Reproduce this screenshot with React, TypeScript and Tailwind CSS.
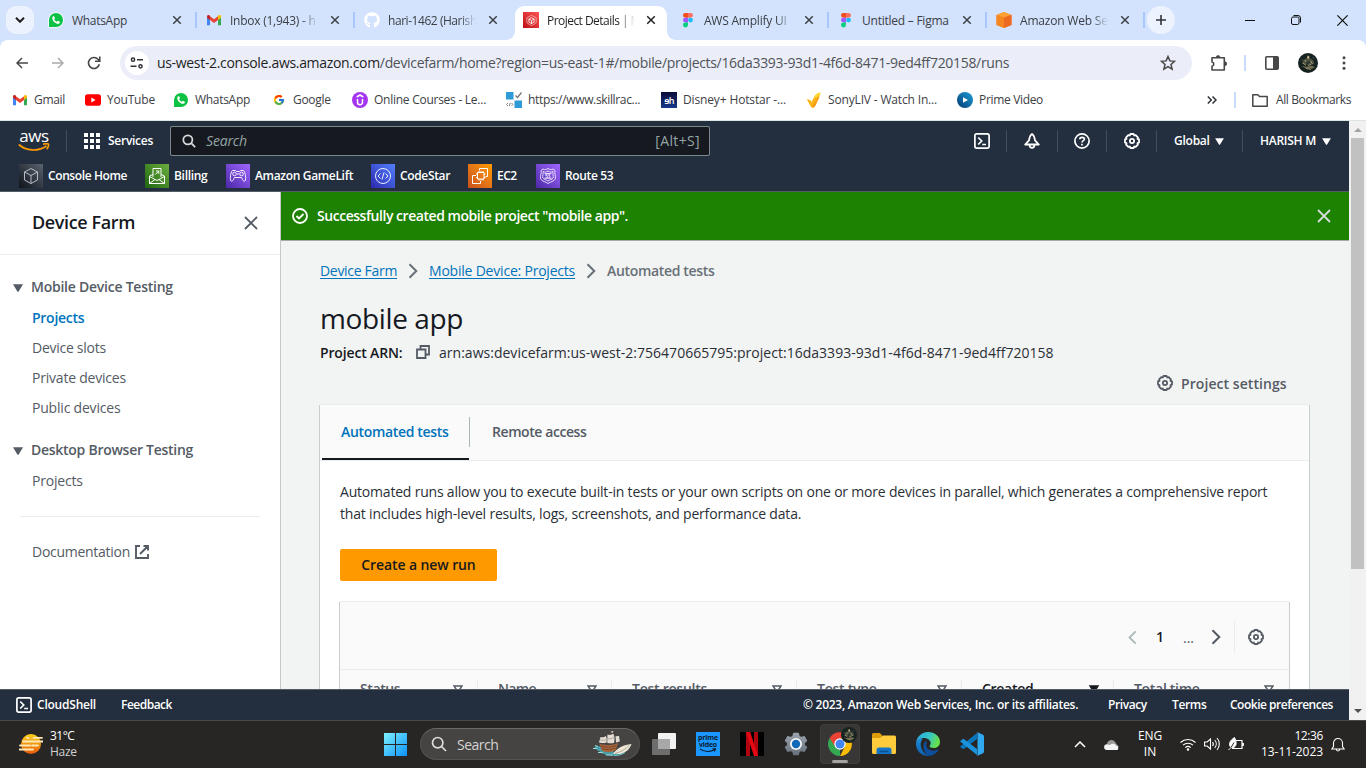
import type { ReactNode } from "react";
import { FaGithub } from "react-icons/fa";
import { FcGoogle } from "react-icons/fc";

type P = { className?: string };

/* ---------- brand icons ---------- */
const WhatsApp = () => (
  <span className="flex h-4 w-4 shrink-0 items-center justify-center">
    <span className="flex h-[14px] w-[14px] items-center justify-center rounded-full rounded-bl-[3px] bg-[#0cc143] ring-1 ring-white/70">
      <svg viewBox="0 0 24 24" className="h-[10px] w-[10px]">
        <path fill="#fff" d="M6.600 2.500c-.7.1-3.800 1.900-3.600 5.400.3 6.300 7.700 13.400 13.900 13.400 2.700-.1 4.600-2.300 4.600-4.300 0-.8-4.600-3.300-5.400-3.100-.8.3-1.700 2.500-2.500 2.500-1.300 0-5.900-4.100-6.100-6 0-.7 2-1.700 2-2.700C9.400 6.700 7.600 2.400 6.600 2.500z" />
      </svg>
    </span>
  </span>
);
const Gmail = () => (
  <svg viewBox="0 0 16 16" className="h-4 w-4 shrink-0">
    <path fill="#4285f4" d="M1 5v8.200h3V7.500z" />
    <path fill="#34a853" d="M15 5v8.200h-3V7.500z" />
    <path fill="#ea4335" d="M4 4.200 8 7.300l4-3.100v3.900l-4 3-4-3z" />
    <path fill="#c5221f" d="M1 5c0-2.200 1.700-2.500 3-1.300v4.200L1 5.700z" />
    <path fill="#fbbc04" d="M15 5c0-2.200-1.700-2.500-3-1.300v4.200l3-2.200z" />
  </svg>
);
const YouTube = () => (
  <svg viewBox="0 0 16 16" className="h-4 w-4 shrink-0">
    <rect y="2.300" width="16" height="11.400" rx="2.800" fill="#f00" />
    <path d="M6.300 5.500v5l4.200-2.500z" fill="#fff" />
  </svg>
);
const Udemy = () => (
  <svg viewBox="0 0 16 16" className="h-4 w-4 shrink-0">
    <circle cx="8" cy="8" r="8" fill="#a435f0" />
    <path d="M4.700 5 8 3l3.300 2M5.500 7v3.200a2.500 2.500 0 0 0 5 0V7" fill="none" stroke="#fff" strokeWidth="1.500" />
  </svg>
);
const SkillRack = () => (
  <svg viewBox="0 0 16 16" className="h-4 w-4 shrink-0">
    <rect width="7.500" height="7.500" fill="#2f9bd6" />
    <rect x="8.500" y="8.500" width="7.500" height="7.500" fill="#2f9bd6" />
    <path d="m9.500 3.500 2 2L15.500.5" fill="none" stroke="#777" strokeWidth="1.300" />
    <path d="M2 11 .500 12.500 2 14M5.500 11 7 12.500 5.500 14M4.300 10.800l-1 3.400" fill="none" stroke="#777" strokeWidth=".9" />
  </svg>
);
const Hotstar = () => (
  <span className="flex h-4 w-4 shrink-0 items-center justify-center bg-gradient-to-b from-[#0a0d38] to-[#163a8c] text-[9px] font-semibold leading-none tracking-[-0.8px] text-white">ɘh</span>
);
const SonyLiv = () => (
  <svg viewBox="0 0 16 16" className="h-4 w-4 shrink-0">
    <path d="M.8 7.200c2.200-.2 4 .6 4.700 2.800L8.500 4.500C10 2 12 .800 14.500.500c-.8 2-.7 3.500-1.500 5.500L9 14.300c-1.200 1.800-3.600 1.800-4.600-.2z" fill="#fbb516" />
    <path d="M8.500 4.500C10 2 12 .800 14.500.500l-.8 3.300L9 6z" fill="#fdd835" />
    <path d="M13.300 5 9 14.300c-.9 1.300-2.200 1.500-3.200 1L12 5z" fill="#f4991a" />
  </svg>
);
const PrimePlay = () => (
  <svg viewBox="0 0 16 16" className="h-4 w-4 shrink-0">
    <defs>
      <linearGradient id="pv" x1="1" y1="0" x2="0" y2="1"><stop stopColor="#1ca0d8" /><stop offset="1" stopColor="#063a72" /></linearGradient>
    </defs>
    <circle cx="8" cy="8" r="8" fill="url(#pv)" />
    <path d="M6 5.200v5.600L11 8z" fill="#fff" />
  </svg>
);
const Figma = () => (
  <svg viewBox="0 0 16 16" className="h-4 w-4 shrink-0">
    <path d="M5.300 1H8v4.700H5.300a2.350 2.350 0 0 1 0-4.700z" fill="#f24e1e" />
    <path d="M8 1h2.700a2.350 2.350 0 0 1 0 4.700H8z" fill="#ff7262" />
    <path d="M5.300 5.700H8v4.700H5.300a2.350 2.350 0 0 1 0-4.700z" fill="#a259ff" />
    <circle cx="10.500" cy="8.050" r="2.400" fill="#1abcfe" />
    <path d="M5.300 10.400H8v2.400a2.500 2.500 0 1 1-2.700-2.400z" fill="#0acf83" />
  </svg>
);
const AwsCube = () => (
  <svg viewBox="0 0 16 16" className="h-4 w-4 shrink-0">
    <path d="M8 0 15.500 3v10L8 16 .500 13V3z" fill="#f58536" />
    <path d="M8 0 15.500 3 8 5.500.500 3z" fill="#ffa033" />
    <path d="M8 5.500 15.500 3v10L8 16z" fill="#ec6a22" />
    <path d="M8 5.500.500 3v10L8 16z" fill="#f6861f" />
  </svg>
);
const DeviceFarmIcon = () => (
  <span className="flex h-4 w-4 shrink-0 items-center justify-center bg-gradient-to-tr from-[#bd0816] to-[#ff5252]">
    <svg viewBox="0 0 14 14" className="h-[13px] w-[13px]" fill="none" stroke="#fff">
      <path d="M7 1.500 12 4v5.500L7 12.500 2 9.500V4z" strokeWidth=".7" opacity=".75" />
      <path d="M7 10.500V7L4.200 5.500M7 7l2.800-1.500M4.200 5.500v3.200L7 10.300l2.800-1.600V5.500L7 4z" strokeWidth=".9" />
    </svg>
  </span>
);
const Avatar = ({ className = "" }: P) => (
  <svg viewBox="0 0 20 20" className={className}>
    <defs><clipPath id="av"><circle cx="10" cy="10" r="10" /></clipPath></defs>
    <g clipPath="url(#av)">
      <rect width="20" height="20" fill="#172321" />
      <path d="M8 5.500c1-1 4-1 5 .5l2.500 1.500.5 3.500-3.300 1-5.800-.5-3-1L5.500 7z" fill="#4f5341" />
      <path d="M9.500 3c1-.6 2 0 1.900 1.500L10.200 6 9 5z" fill="#c9b38f" />
      <path d="M7.500 7.500 9.500 9l2.500-1.500-.5 2.500-2.500 1.500z" fill="#26322b" />
      <path d="M3.500 13l4.500.7 5.500-1 3.500 1.300-3 1.800-6.500-.5z" fill="#746f50" />
      <path d="M5 10l3 2.500M12.500 8l2 3M8 15.500l5 .8M7 7l1 2M13 11.500l-3 1" stroke="#b5a984" strokeWidth=".8" />
      <path d="M3.500 8l1.500-2M15 4l1 2" stroke="#3f5048" />
    </g>
  </svg>
);

/* ---------- line icons ---------- */
const Cross = ({ className = "" }: P) => (
  <svg viewBox="0 0 16 16" className={className} fill="none" stroke="currentColor"><path d="m2 2 12 12M14 2 2 14" /></svg>
);
const Gear = ({ className = "" }: P) => (
  <svg viewBox="0 0 16 16" className={className} fill="none" stroke="currentColor" strokeWidth="1.800">
    <path strokeLinejoin="round" d="M6.400 1h3.200l.6 1.500 1.500-.4 2.200 2.200-.4 1.500 1.500.6v3.200l-1.500.6.4 1.500-2.200 2.200-1.500-.4-.6 1.500H6.400l-.6-1.500-1.500.4-2.200-2.200.4-1.500L1 9.600V6.400l1.500-.6-.4-1.500 2.200-2.200 1.500.4z" />
    <circle cx="8" cy="8" r="2.100" />
  </svg>
);
const Terminal = ({ className = "" }: P) => (
  <svg viewBox="0 0 16 16" className={className} fill="none" stroke="currentColor" strokeWidth="1.700">
    <rect x=".9" y=".9" width="14.200" height="14.200" rx="1.800" />
    <path d="M4.200 4.500 7.700 8l-3.500 3.500M8.200 11.500H12" />
  </svg>
);
const Caret = ({ className = "" }: P) => (
  <svg viewBox="0 0 10 8" className={className} fill="currentColor"><path d="M0 .200h10L5.500 7.800h-1z" /></svg>
);
const Chevron = ({ className = "" }: P) => (
  <svg viewBox="0 0 10 16" className={className} fill="none" stroke="currentColor" strokeWidth="2"><path d="m1.500 1.200 6.800 6.800-6.800 6.800" /></svg>
);
const Search = ({ className = "" }: P) => (
  <svg viewBox="0 0 16 16" className={className} fill="none" stroke="currentColor"><circle cx="6.700" cy="6.700" r="5.200" /><path d="m10.500 10.500 4.500 4.500" /></svg>
);

/* ---------- browser chrome ---------- */
type Tab = { icon: ReactNode; title: string; cls: string; active?: boolean; sep?: boolean };
const fade = "[mask-image:linear-gradient(to_right,#000_80%,transparent_98%)] ";
const tabs: Tab[] = [
  { icon: <WhatsApp />, title: "WhatsApp", cls: "tracking-[-0.3px]", sep: true },
  { icon: <Gmail />, title: "Inbox (1,943) - h", cls: fade + "tracking-[-0.25px]", sep: true },
  { icon: <FaGithub className="h-4 w-4 shrink-0 text-white" />, title: "hari-1462 (Harish", cls: fade + "tracking-[-0.45px]" },
  { icon: <DeviceFarmIcon />, title: "Project Details | M", cls: fade + "tracking-[-0.54px]", active: true },
  { icon: <Figma />, title: "AWS Amplify UI", cls: fade + "tracking-[-0.22px]", sep: true },
  { icon: <Figma />, title: "Untitled – Figma", cls: "tracking-[-0.24px]", sep: true },
  { icon: <AwsCube />, title: "Amazon Web Se", cls: fade + "tracking-[-0.2px]", sep: true },
];

function TabStrip() {
  return (
    <div className="flex h-10 shrink-0 bg-[#d3e3fd] text-[12px] text-[#3c4045]">
      <div className="mt-1.5 ml-1.5 mr-1 flex h-7 w-7 items-center justify-center rounded-[10px] bg-[#edf3fe]">
        <svg viewBox="0 0 10 6" className="h-1.5 w-[10px]" fill="none" stroke="#1f1f1f" strokeWidth="2"><path d="m1 .800 4 4 4-4" /></svg>
      </div>
      {tabs.map((t, i) => (
        <div key={i} className="relative flex h-10 w-[158px] shrink-0 pt-1.5">
          {t.active && (
            <svg viewBox="0 0 172 34" className="absolute -left-[7px] top-1.5 h-[34px] w-[172px]">
              <path fill="#fff" d="M0 34c7 0 10-4 10-10V10C10 4 14 0 20 0h132c6 0 10 4 10 10v14c0 6 3 10 10 10z" />
            </svg>
          )}
          <div className={t.active ? "relative flex flex-1 items-center pl-[11px] pb-[6px] text-[#1f1f1f]" : "relative flex flex-1 items-center pl-[10px] pb-[6px]"}>
            {t.icon}
            <span className={"ml-2 w-[90px] overflow-hidden whitespace-nowrap pt-[2px] " + t.cls}>{t.title}</span>
            <Cross className={(t.active ? "ml-[9px]" : "ml-[10px]") + " h-[10px] w-[10px] stroke-[2.300]"} />
          </div>
          {t.sep && <span className="absolute right-[-1px] top-3 h-4 w-[2px] bg-[#a8c7fa]" />}
        </div>
      ))}
      <div className="mt-1.5 ml-[3px] flex h-7 w-7 items-center justify-center rounded-full bg-[#edf3fe]">
        <svg viewBox="0 0 10 10" className="h-[10px] w-[10px]" stroke="#303338" strokeWidth="1.600"><path d="M5 0v10M0 5h10" /></svg>
      </div>
      <div className="ml-auto mr-[18px] flex items-center gap-9 text-[#111]">
        <svg viewBox="0 0 10 10" className="h-[10px] w-[10px]" stroke="currentColor"><path d="M0 5.500h10" /></svg>
        <svg viewBox="0 0 10 10" className="h-[10px] w-[10px]" fill="none" stroke="currentColor"><rect x=".5" y="2" width="7.500" height="7.500" rx="1.500" /><path d="M2.500.500H7A2.500 2.500 0 0 1 9.500 3v4.500" /></svg>
        <svg viewBox="0 0 10 10" className="h-[11px] w-[11px]" fill="none" stroke="currentColor" strokeWidth="1.100"><path d="m.3.300 9.400 9.400M9.700.300.300 9.700" /></svg>
      </div>
    </div>
  );
}

function Toolbar() {
  return (
    <div className="bg-[#d3e3fd]">
      <div className="flex h-[43px] items-center rounded-t-lg bg-white pt-[3px] text-[#474747]">
        <svg viewBox="0 0 12 12" className="ml-4 h-3 w-3" fill="none" stroke="currentColor" strokeWidth="1.500"><path d="M12 6H1.200M6 1 1 6l5 5" /></svg>
        <svg viewBox="0 0 12 12" className="ml-6 h-3 w-3" fill="none" stroke="#ababab" strokeWidth="1.500"><path d="M0 6h10.800M6 1l5 5-5 5" /></svg>
        <svg viewBox="0 0 14 14" className="ml-[23px] h-[14px] w-[14px]" fill="none" stroke="currentColor" strokeWidth="1.600"><path d="M12.300 8.300A5.500 5.500 0 1 1 11 3.200l1.300 1.300M12.800.500v4.700H8" /></svg>
        <div className="ml-[19px] flex h-[34px] w-[1072px] items-center rounded-full bg-[#ebeef8] px-[5px]">
          <div className="flex h-6 w-6 items-center justify-center rounded-full bg-white">
            <svg viewBox="0 0 14 12" className="h-3 w-[14px]" fill="none" stroke="#303338" strokeWidth="1.500"><circle cx="3" cy="2.700" r="1.600" /><path d="M7 2.700h6M.5 9.300h6" /><circle cx="10.500" cy="9.300" r="1.600" /></svg>
          </div>
          <div className="ml-2 whitespace-nowrap pb-[2px] text-[14px] tracking-[-0.32px] text-[#505358]">
            <span className="text-[#1f1f1f]">us-west-2.console.aws.amazon.com</span>/devicefarm/home?region=us-east-1#/mobile/projects/16da3393-93d1-4f6d-8471-9ed4ff720158/runs
          </div>
          <svg viewBox="0 0 16 16" className="ml-auto mr-[11px] h-4 w-4" fill="none" stroke="currentColor" strokeWidth="1.500"><path d="m8 1.500 1.900 4.400 4.700.4-3.600 3.100 1.100 4.700L8 11.600l-4.100 2.500L5 9.400 1.400 6.300l4.700-.4z" /></svg>
        </div>
        <svg viewBox="0 0 18 18" className="ml-[18px] h-[18px] w-[18px]" fill="none" stroke="currentColor" strokeWidth="1.600">
          <path strokeLinejoin="round" d="M2 3.800h12.300V16H2v-3.800c2.400-.4 2.400-3.800 0-4.200z" />
          <path d="M6.200 3.500a1.900 1.900 0 0 1 3.800 0zM14.800 7.800a1.900 1.900 0 0 1 0 3.800z" fill="currentColor" strokeWidth=".8" />
        </svg>
        <span className="ml-[16px] h-4 w-[2px] bg-[#c9dcfb]" />
        <svg viewBox="0 0 14 14" className="ml-[19px] h-[14px] w-[14px]"><rect x=".8" y=".8" width="12.400" height="12.400" rx="1" fill="none" stroke="currentColor" strokeWidth="1.600" /><path d="M8 1h5v12H8z" fill="currentColor" /></svg>
        <Avatar className="ml-[19px] h-5 w-5" />
        <svg viewBox="0 0 4 14" className="ml-6 h-[14px] w-1" fill="currentColor"><circle cx="2" cy="1.800" r="1.500" /><circle cx="2" cy="7" r="1.500" /><circle cx="2" cy="12.200" r="1.500" /></svg>
      </div>
    </div>
  );
}

const bookmarks = [
  { icon: <Gmail />, label: "Gmail", cls: "w-[73px] tracking-[-0.3px]" },
  { icon: <YouTube />, label: "YouTube", cls: "w-[88px] tracking-[-0.2px]" },
  { icon: <WhatsApp />, label: "WhatsApp", cls: "w-[98px] tracking-[-0.3px]" },
  { icon: <FcGoogle className="mx-[2px] h-3 w-3 shrink-0" />, label: "Google", cls: "w-[81px] tracking-[-0.3px]" },
  { icon: <Udemy />, label: "Online Courses - Le...", cls: "w-[154px] tracking-[-0.26px]" },
  { icon: <SkillRack />, label: "https://www.skillrac...", cls: "w-[155px] tracking-[-0.34px]" },
  { icon: <Hotstar />, label: "Disney+ Hotstar -...", cls: "w-[145px] tracking-[-0.14px]" },
  { icon: <SonyLiv />, label: "SonyLIV - Watch In...", cls: "w-[151px] tracking-[-0.16px]" },
  { icon: <PrimePlay />, label: "Prime Video", cls: "w-[100px] tracking-[-0.33px]" },
];

function Bookmarks() {
  return (
    <div className="flex h-[38px] items-center border-b border-[#dde5e4] bg-white pl-3 pr-[15px] pb-[3px] text-[12px] text-[#3c4045]">
      {bookmarks.map((b) => (
        <div key={b.label} className={"flex shrink-0 items-center gap-[6px] whitespace-nowrap " + b.cls}>{b.icon}{b.label}</div>
      ))}
      <svg viewBox="0 0 10 8" className="ml-auto h-2 w-[10px]" fill="none" stroke="#303338" strokeWidth="1.500"><path d="m.800.500 3.500 3.500L.8 7.500M5.500.500 9 4 5.500 7.500" /></svg>
      <span className="ml-[17px] h-4 w-[2px] bg-[#c9dcfb]" />
      <svg viewBox="0 0 16 13" className="ml-4 h-[13px] w-4" fill="none" stroke="#474747" strokeWidth="1.500"><path d="M.8.800h5L7.500 2.500h7.700v9.700H.8z" strokeLinejoin="round" /></svg>
      <span className="ml-2 tracking-[-0.38px]">All Bookmarks</span>
    </div>
  );
}

/* ---------- AWS console header ---------- */
const svc = "h-6 w-6 shrink-0";
const favourites = [
  {
    label: "Console Home", cls: "w-[126px] tracking-[-0.4px]",
    icon: <svg viewBox="0 0 24 24" className={svc + " bg-gradient-to-tr from-[#10151c] to-[#5b6470]"} fill="none" stroke="#c4c9cf" strokeWidth=".9"><path d="M12 4.500 18.500 8v8L12 19.500 5.500 16V8zM5.500 8l6.500 3.500L18.500 8M12 11.500v8" /></svg>,
  },
  {
    label: "Billing", cls: "w-[81px] tracking-[-0.3px]",
    icon: <svg viewBox="0 0 24 24" className={svc + " bg-gradient-to-tr from-[#1b660f] to-[#6cae3e]"} fill="none" stroke="#fff"><path d="M8 13V4.500h8V13M8 10.500 4.500 12v7.500h15V12L16 10.500M4.500 12.500 12 16.500l7.500-4M4.500 19.500l5.500-4M19.500 19.500l-5.500-4M10.300 10.500l3.200-3.200M11 7h2.800v2.800" /></svg>,
  },
  {
    label: "Amazon GameLift", cls: "w-[145px] tracking-[-0.34px]",
    icon: <svg viewBox="0 0 24 24" className={svc + " bg-gradient-to-tr from-[#4d27a8] to-[#a166ff]"} fill="none" stroke="#fff" strokeWidth=".9"><path d="M6.500 6.500h3l1 1h3l1-1h3c1.500 1 2.500 6 2 9.500-.5 2-2 1.500-3-.5l-1-2h-7l-1 2c-1 2-2.500 2.500-3 .5-.5-3.500.5-8.500 2-9.500z" /><circle cx="8.500" cy="10" r="1.800" /><circle cx="15.500" cy="10" r="1.800" /><path d="M11 10h2" /></svg>,
  },
  {
    label: "CodeStar", cls: "w-[97px] tracking-[-0.35px]",
    icon: <svg viewBox="0 0 24 24" className={svc + " bg-gradient-to-tr from-[#2e27ad] to-[#527fff]"} fill="none" stroke="#fff" strokeWidth=".9"><circle cx="12" cy="12" r="7.500" /><path d="m9.500 9.500-2.500 2.500 2.500 2.500M14.500 9.500 17 12l-2.500 2.500M13 8.500l-2 7" /></svg>,
  },
  {
    label: "EC2", cls: "w-[68px] tracking-[-0.5px]",
    icon: <svg viewBox="0 0 24 24" className={svc + " bg-gradient-to-tr from-[#c8511b] to-[#f90]"} fill="none" stroke="#fff"><path d="M11.500 6.500v-2h8v8h-2M8 11.500H4.500v8h8V17M9.500 8.500h6.500V15H9.500zM11 7v1.500M13 7v1.500M15 7v1.500M11 15v1.500M13 15v1.500M15 15v1.500M8 10h1.500M8 13.500h1.500M16 10h1.500M16 13.500h1.500" /></svg>,
  },
  {
    label: "Route 53", cls: "tracking-[-0.35px]",
    icon: (
      <svg viewBox="0 0 24 24" className={svc + " bg-gradient-to-tr from-[#4d27a8] to-[#a166ff]"} fill="none" stroke="#fff" strokeWidth=".8">
        <path d="M5 6.500 7 5c2 1 3.500.5 5-.5 1.500 1 3 1.500 5 .5l2 1.500c-1 3 1.300 5 .3 8.500-1.500 2.800-5 2.500-7.300 4.500-2.300-2-5.800-1.700-7.300-4.500-1-3.500 1.300-5.500.3-8.500z" />
        <path d="M7 7.500c2 1 3.500.5 5-.5 1.500 1 3 1.500 5 .5-.5 3 .7 4.500.2 6.500-1 1.700-3.500 1.500-5.200 3-1.700-1.500-4.200-1.300-5.200-3-.5-2 .7-3.500.2-6.500zM8.500 9.500h7M8.500 14.300h7" />
        <text x="9" y="13.700" fontSize="5" fontWeight="600" fill="#fff" stroke="none">53</text>
      </svg>
    ),
  },
];

const Bar = ({ className = "" }: P) => <span className={"h-[22px] w-px bg-[#414d5c] " + className} />;

function ConsoleHeader() {
  return (
    <header className="flex h-[71px] shrink-0 flex-col border-b border-[#545b64] bg-[#232f3e] text-[12px] font-semibold text-white">
      <div className="flex h-[39px] items-center pt-px">
        <div className="ml-[18px] flex w-8 flex-col items-center">
          <span className="h-[13px] text-[17px] font-medium leading-[11px] tracking-[-0.4px]">aws</span>
          <svg viewBox="0 0 32 9" className="h-[9px] w-8" fill="none" stroke="#f90" strokeWidth="1.700"><path d="M.8 1.500C8 8 20 9 28.500 3M25 1.300c2-.6 5-.6 5.500 0 .4.7-.5 3.500-1.800 5" /></svg>
        </div>
        <Bar className="ml-4" />
        <svg viewBox="0 0 16 16" className="ml-[17px] h-4 w-4" fill="#fff"><path d="M0 0h4v4H0zM6 0h4v4H6zM12 0h4v4h-4zM0 6h4v4H0zM6 6h4v4H6zM12 6h4v4h-4zM0 12h4v4H0zM6 12h4v4H6zM12 12h4v4h-4z" /></svg>
        <span className="ml-2 w-[62px] tracking-[-0.27px]">Services</span>
        <div className="flex h-[30px] w-[540px] items-center rounded-[2px] border border-[#95a5a6]/80 bg-[#16191f] text-[14px] font-normal text-[#95a5a6]">
          <Search className="ml-[11px] h-[14px] w-[14px] stroke-[2] text-[#d5dbdb]" />
          <span className="ml-[10px] pb-[2px] italic tracking-[-0.15px]">Search</span>
          <span className="ml-auto mr-[9px] pb-[2px] tracking-[0.35px]">[Alt+S]</span>
        </div>
        <Terminal className="ml-[264px] h-4 w-4" />
        <Bar className="ml-4" />
        <svg viewBox="0 0 16 16" className="ml-[17px] h-4 w-4" fill="none" stroke="currentColor" strokeWidth="1.800" strokeLinejoin="round"><path d="M8 1C5.800 2.200 5.500 4.500 5 7.300L1.200 11.500h13.600L11 7.300C10.500 4.500 10.200 2.200 8 1zM5.500 11.500c.2 4.600 4.800 4.600 5 0" /></svg>
        <Bar className="ml-[17px]" />
        <svg viewBox="0 0 16 16" className="ml-4 h-4 w-4" fill="none" stroke="currentColor" strokeWidth="1.700"><circle cx="8" cy="8" r="7.100" /><path d="M5.800 6.300c0-2.700 4.600-2.700 4.600 0C10.400 7.800 8 7.500 8 9.600M8 10.800v1.600" /></svg>
        <Bar className="ml-4" />
        <Gear className="ml-[17px] h-4 w-4" />
        <Bar className="ml-4" />
        <span className="ml-[17px] w-[41px] tracking-[-0.25px]">Global</span>
        <Caret className="h-[7px] w-[9px]" />
        <Bar className="ml-[18px]" />
        <span className="ml-[17px] w-[62px] whitespace-nowrap tracking-[-0.26px]">HARISH M</span>
        <Caret className="h-[7px] w-[9px]" />
      </div>
      <div className="flex h-[31px] items-center pl-[19px]">
        {favourites.map((f) => (
          <div key={f.label} className={"flex shrink-0 items-center gap-[5px] whitespace-nowrap " + f.cls}>{f.icon}{f.label}</div>
        ))}
      </div>
    </header>
  );
}

/* ---------- side navigation ---------- */
function SideNav() {
  const link = "flex h-[30px] items-center pl-8 pb-[2px] whitespace-nowrap";
  return (
    <aside className="w-[281px] shrink-0 border-r border-[#c3c8c8] bg-white text-[14px] text-[#545b64]">
      <div className="flex h-[63px] items-center justify-between border-b border-[#eaeded] pl-8 pr-[21px]">
        <h2 className="pb-[2px] text-[18px] font-semibold tracking-[-0.38px] text-[#16191f]">Device Farm</h2>
        <Cross className="h-4 w-4 stroke-[1.900]" />
      </div>
      <div className="mt-[17px] flex h-[31px] items-center pl-[13px] font-semibold tracking-[-0.24px]"><Caret className="mr-2 h-2 w-[10px]" /><span className="pb-[2px]">Mobile Device Testing</span></div>
      <div className={link + " font-semibold tracking-[-0.27px] text-[#0073bb]"}>Projects</div>
      <div className={link + " tracking-[-0.27px]"}>Device slots</div>
      <div className={link + " tracking-[-0.21px]"}>Private devices</div>
      <div className={link + " tracking-[-0.2px]"}>Public devices</div>
      <div className="mt-3 flex h-[31px] items-center pl-[13px] font-semibold tracking-[-0.27px]"><Caret className="mr-2 h-2 w-[10px]" /><span className="pb-[2px]">Desktop Browser Testing</span></div>
      <div className={link + " tracking-[-0.2px]"}>Projects</div>
      <div className="mx-5 mt-5 border-t border-[#eaeded]" />
      <div className="mt-5 flex h-[30px] items-center pl-8">
        <span className="w-[103px] pb-[2px] tracking-[-0.28px]">Documentation</span>
        <svg viewBox="0 0 14 14" className="h-[14px] w-[14px]" fill="none" stroke="currentColor" strokeWidth="1.900"><path d="M5 1H1v12h12V9M8.500 1H13v4.500M13 1 5 9" /></svg>
      </div>
    </aside>
  );
}

/* ---------- main ---------- */
const columns = [
  { label: "Status", cls: "w-[137px] tracking-[-0.4px]" },
  { label: "Name", cls: "w-[134px] tracking-[-0.65px]" },
  { label: "Test results", cls: "w-[185px] tracking-[-0.25px]" },
  { label: "Test type", cls: "w-[165px] tracking-[-0.25px]" },
  { label: "Created", cls: "w-[152px] tracking-[-0.3px]", sorted: true },
  { label: "Total time", cls: "w-[175px] tracking-[-0.3px]" },
];

function Main() {
  return (
    <main className="flex-1 overflow-hidden bg-[#f2f3f3] text-[14px] text-[#16191f]">
      <div className="-ml-px flex h-12 items-center bg-[#1d8102] pl-3 pr-[17px] text-white shadow-[0_1px_0_#a3a9ad]">
        <svg viewBox="0 0 16 16" className="h-4 w-4" fill="none" stroke="currentColor" strokeWidth="1.800"><circle cx="8" cy="8" r="7" /><path d="m4.500 8 2.500 2.500 4.500-4.500" /></svg>
        <span className="ml-[9px] pb-[2px] font-semibold tracking-[-0.46px]">Successfully created mobile project "mobile app".</span>
        <Cross className="ml-auto h-4 w-4 stroke-[1.900] text-[#d5dbdb]" />
      </div>
      <div className="ml-[39px] w-[989px] whitespace-nowrap">
        <nav className="mt-5 flex h-[22px] items-center text-[#0073bb]">
          <a className="w-[88px] pb-[2px] tracking-[-0.31px] underline underline-offset-2">Device Farm</a>
          <Chevron className="h-4 w-[10px] text-[#687078]" />
          <a className="ml-[11px] w-[157px] pb-[2px] tracking-[-0.21px] underline underline-offset-2">Mobile Device: Projects</a>
          <Chevron className="h-4 w-[10px] text-[#687078]" />
          <span className="ml-[11px] pb-[2px] font-semibold tracking-[-0.33px] text-[#687078]">Automated tests</span>
        </nav>
        <h1 className="mt-[18px] h-[41px] text-[28px] leading-[36px] tracking-[-0.38px]">mobile app</h1>
        <div className="flex h-[22px] items-center">
          <span className="w-24 font-semibold tracking-[-0.15px]">Project ARN:</span>
          <svg viewBox="0 0 14 14" className="h-[14px] w-[14px]" fill="none" stroke="#545b64" strokeWidth="1.800"><path d="M1 4.500h8.500V13H1zM4.500 4.500V1H13v8.500H9.500" /></svg>
          <span className="ml-[9px] tracking-[0.02px] text-[#2b2f36]">arn:aws:devicefarm:us-west-2:756470665795:project:16da3393-93d1-4f6d-8471-9ed4ff720158</span>
        </div>
        <div className="mt-[9px] flex h-[22px] items-center justify-end pr-[21px] text-[#545b64]">
          <Gear className="mr-2 h-4 w-4" />
          <span className="w-[107px] font-semibold tracking-[0.07px]">Project settings</span>
        </div>
        <section className="mt-[10px] h-[400px] border-t border-[#eaeded] bg-white shadow-[1px_1px_0_#c8cdcd,-1px_1px_0_#c8cdcd]">
          <div className="flex h-14 border-b border-[#eaeded] bg-[#fafafa] font-semibold">
            <div className="ml-[2px] flex w-[147px] items-center border-b-2 border-[#16191f] pl-[19px] tracking-[-0.33px] text-[#0073bb]">Automated tests</div>
            <div className="mt-3 h-[30px] w-px bg-[#aab7b8]" />
            <div className="flex items-center pb-0.5 pl-[22px] tracking-[-0.42px] text-[#545b64]">Remote access</div>
          </div>
          <div className="px-5 pt-5">
            <p className="leading-[22px] text-[#2b2f36]">
              <span className="block tracking-[-0.2px]">Automated runs allow you to execute built-in tests or your own scripts on one or more devices in parallel, which generates a comprehensive report</span>
              <span className="block tracking-[-0.18px]">that includes high-level results, logs, screenshots, and performance data.</span>
            </p>
            <button className="mt-6 flex h-8 w-[157px] items-center justify-center rounded-[2px] bg-[#f90] pb-[2px] font-semibold tracking-[-0.1px]">Create a new run</button>
            <div className="mt-5 h-40 border-t border-[#eaeded] bg-[#fafafa] shadow-[1px_1px_0_#c8cdcd,-1px_1px_0_#c8cdcd]">
              <div className="flex h-[68px] items-center justify-end border-b border-[#eaeded] pr-[25px] pt-[3px] text-[#545b64]">
                <Chevron className="h-[15px] w-[9px] rotate-180 text-[#aab7b8]" />
                <span className="ml-[19px] pb-[2px] font-semibold text-[#16191f]">1</span>
                <span className="ml-[19px] w-[28px]">...</span>
                <Chevron className="h-4 w-[10px]" />
                <span className="ml-[13px] h-8 w-px bg-[#eaeded]" />
                <Gear className="ml-[13px] h-4 w-4" />
              </div>
              <div className="flex h-9 pt-[9px] font-semibold text-[#545b64]">
                {columns.map((c, i) => (
                  <div key={c.label} className={"flex h-[19px] shrink-0 items-center justify-between " + (i === 0 ? "pl-5 pr-[14px] " : "border-l border-[#eaeded] pl-5 pr-[14px] ") + (c.sorted ? "text-[#16191f] " : "") + c.cls}>
                    {c.label}
                    <svg viewBox="0 0 10 8" className="h-2 w-[10px]" fill={c.sorted ? "#16191f" : "none"} stroke="currentColor" strokeWidth="1.500"><path d="M1 1h8L5 7z" /></svg>
                  </div>
                ))}
              </div>
            </div>
          </div>
        </section>
      </div>
    </main>
  );
}

function Footer() {
  return (
    <footer className="flex h-[31px] shrink-0 items-center border-t border-[#545b64] bg-[#232f3e] pl-4 pr-4 text-[12px] font-semibold text-white">
      <Terminal className="h-4 w-4" />
      <span className="ml-[5px] w-[84px] tracking-[-0.22px]">CloudShell</span>
      <span className="tracking-[-0.5px]">Feedback</span>
      <span className="ml-auto w-[305px] tracking-[-0.27px]">© 2023, Amazon Web Services, Inc. or its affiliates.</span>
      <span className="w-[64px] tracking-[-0.4px]">Privacy</span>
      <span className="w-[58px] tracking-[-0.35px]">Terms</span>
      <span className="w-[103px] whitespace-nowrap tracking-[-0.49px]">Cookie preferences</span>
    </footer>
  );
}

function ScrollBar() {
  return (
    <div className="flex w-[17px] shrink-0 flex-col items-center bg-[#f1f1f1]">
      <div className="flex h-[17px] items-center"><svg viewBox="0 0 8 4" className="h-1 w-2" fill="#a3a3a3"><path d="M0 4h8L4 0z" /></svg></div>
      <div className="h-[431px] w-[13px] bg-[#c1c1c1]" />
      <div className="mt-auto flex h-[18px] items-center"><svg viewBox="0 0 8 4" className="h-1 w-2" fill="#505050"><path d="M0 0h8L4 4z" /></svg></div>
    </div>
  );
}

/* ---------- Windows taskbar ---------- */
const Ship = () => (
  <svg viewBox="0 0 40 26" className="h-[26px] w-10">
    <path d="M1 16c3-1.500 5-1 7 0l14 5 8 1c-5 3-14 3.500-18 1.500C8 22 7 20 5 20z" fill="#4a9eaa" />
    <path d="M0 17.500h4M5 21.500h5M13 24h7M2 14.500l3 1" stroke="#9fd8dc" />
    <path d="M6.500 13c7 1.500 13 1.500 18.500-1l-2 6.500c-4 3.500-11 3.500-14.500.5z" fill="#a5643c" />
    <path d="M7.500 15c6 1.500 11 1.500 16-.5M8.500 17.500c5 1.500 9 1.500 14-.5" stroke="#744326" strokeWidth=".8" fill="none" />
    <path d="M11 13V4.500M18 13V1.500M24 12V4" stroke="#70482f" strokeWidth=".8" />
    <path d="M7.500 6c2 .8 4 0 5.500-1l.8 3-.3 3.500c-2.500.8-4.500.8-7.500 0zM14.500 3.500c2.500 1 4 0 6-.8l1 4-.3 5c-2.500.8-5 .8-7 0zM22.500 5c1.500.5 2.500 0 3.500 0l.8 5.500-3.800 1z" fill="#e3ddd4" />
    <path d="M14 7.500c2.500 1 5 0 7-1M7 8.800c2.500.8 4.500.5 6.500 0" stroke="#a89c8e" strokeWidth=".8" fill="none" />
    <path d="m17.500.8 3-.800-1 2z" fill="#e8e8e8" />
    <path d="M20 23c3-5 9-9 18.500-10-1.500 4.500-5 8.500-11 10z" fill="#ebe6d6" />
    <path d="M22 22.500c5-1 11-4.500 14.500-8.500" stroke="#a39b88" strokeWidth=".8" fill="none" />
    <path d="M21 24.500c4 .3 8-1 11-3" stroke="#6cc0c8" fill="none" />
  </svg>
);
const Weather = () => (
  <svg viewBox="0 0 24 22" className="h-[22px] w-6">
    <defs><linearGradient id="sun" x1="0" y1="0" x2="0" y2="1"><stop stopColor="#fcd116" /><stop offset="1" stopColor="#e8590c" /></linearGradient></defs>
    <circle cx="12" cy="11" r="10" fill="url(#sun)" />
    <path d="M8 4.800h15M4 8.500h20M1 12.500h10M13 12.500h6M0 16.500h14" stroke="#fbe8b5" strokeWidth="1.800" strokeLinecap="round" />
    <path d="M10 4.800h4" stroke="#f4b71d" strokeWidth="1.800" />
  </svg>
);
const Windows = () => (
  <svg viewBox="0 0 23 23" className="h-[23px] w-[23px]">
    <defs><linearGradient id="win" x1="0" y1="0" x2="1" y2="1"><stop stopColor="#7df1fd" /><stop offset="1" stopColor="#0a91fb" /></linearGradient></defs>
    <path fill="url(#win)" d="M0 0h11v11H0zM12 0h11v11H12zM0 12h11v11H0zM12 12h11v11H12z" />
  </svg>
);
const Settings = () => (
  <svg viewBox="0 0 24 24" className="h-6 w-6">
    <defs><linearGradient id="st" x1="0" y1="0" x2="0" y2="1"><stop stopColor="#9aa3ad" /><stop offset="1" stopColor="#68727d" /></linearGradient></defs>
    <path fill="url(#st)" stroke="url(#st)" strokeWidth="1.500" strokeLinejoin="round" d="m9.800 1.500 4.400 0 .8 3 2.200 1.200 3-.9 2.200 3.800-2.200 2.200v2.400l2.200 2.200-2.200 3.800-3-.9-2.200 1.200-.8 3H9.800l-.8-3-2.200-1.200-3 .9-2.200-3.800 2.200-2.200v-2.400L1.600 8.600l2.200-3.800 3 .9L9 4.500z" />
    <circle cx="12" cy="12" r="6" fill="#f3f4f5" />
    <circle cx="12" cy="12" r="4.200" fill="#1068b8" />
  </svg>
);
const Chrome = () => (
  <svg viewBox="0 0 24 24" className="h-6 w-6">
    <path d="M12 12v12A12 12 0 0 1 1.610 6z" fill="#34a853" />
    <path d="M12 6.500h10.600A12 12 0 0 1 12 24l4.800-9.200z" fill="#fbbc05" />
    <path d="M1.610 6A12 12 0 0 1 22.400 6.500H12l-4.800 8.200z" fill="#ea4335" />
    <circle cx="12" cy="12" r="5.700" fill="#fff" />
    <circle cx="12" cy="12" r="4.500" fill="#4285f4" />
  </svg>
);
const Explorer = () => (
  <svg viewBox="0 0 24 24" className="h-6 w-6">
    <path d="M0 2.500A1.500 1.500 0 0 1 1.500 1H8l2.500 3v3H0z" fill="#dd9a0b" />
    <path d="M0 6h8L11 3.500h11.500A1.500 1.500 0 0 1 24 5v15.500a1.500 1.500 0 0 1-1.500 1.500h-21A1.500 1.500 0 0 1 0 20.500z" fill="#fdcb3c" />
    <path d="M4.500 18A2.500 2.500 0 0 1 7 15.500h10a2.500 2.500 0 0 1 2.500 2.500v4h-15z" fill="#1474c6" />
    <path d="M7.500 19.500h9" stroke="#0b4f91" strokeWidth="1.500" />
  </svg>
);
const Edge = () => (
  <svg viewBox="0 0 24 24" className="h-6 w-6">
    <defs>
      <linearGradient id="e1" x1="0" y1="0" x2="1" y2=".3"><stop stopColor="#2aa7ea" /><stop offset=".6" stopColor="#35c6c4" /><stop offset="1" stopColor="#66e04c" /></linearGradient>
      <linearGradient id="e2" x1="0" y1="0" x2="0" y2="1"><stop stopColor="#1b8fdc" /><stop offset="1" stopColor="#0d5cab" /></linearGradient>
    </defs>
    <path d="M0 11C1 4 6 0 12 0c7 0 12 4.500 12 10 0 3.500-2.500 6-6 6-3 0-4.500-1-4.300-2 .2-.8 1-1.200 1-3C14.500 7.500 10 5.500 6.500 6 3 6.500.500 9 0 11z" fill="url(#e1)" />
    <path d="M0 12C.2 8 3.800 6.200 7 6.500c-1.500 1.500-2.500 3.500-2.300 6.500.3 5 4.300 9.500 8.800 10.900C6 24.800 0 19 0 12z" fill="url(#e2)" />
    <path d="M7.500 14c0-3 1.500-4.500 3-5.300.8 2-.3 3-.3 4.800 0 3.500 4.800 6 8.800 5 1.500-.3 2.700-1.300 3.200-.7.5.7-3 5.500-8.700 6.100C10 22.800 7.500 18.500 7.500 14z" fill="#0b4f9e" />
  </svg>
);
const VsCode = () => (
  <svg viewBox="0 0 24 24" className="h-6 w-6">
    <path d="M17 1v6L3.500 17.300.8 15.500a1 1 0 0 1 0-1.600z" fill="#0b75bc" />
    <path d="M17 23v-6L3.500 6.700.8 8.500a1 1 0 0 0 0 1.600z" fill="#1b93db" />
    <path d="M17 0l6 2.700c.6.3 1 .9 1 1.500v15.600c0 .6-.4 1.200-1 1.500L17 24c.4-.3.5-.8.5-1.300V1.300C17.500.800 17.400.300 17 0z" fill="#2fa9f0" />
  </svg>
);

function Taskbar() {
  return (
    <div className="flex h-12 shrink-0 items-center border-t border-[#4a4a49] bg-[#272625] pb-px text-[12px] text-white">
      <div className="flex w-[384px] items-center pl-[19px]">
        <Weather />
        <div className="ml-[7px] leading-4"><div className="tracking-[-0.5px]">31°C</div><div className="tracking-[-0.3px] text-[#d0d0d0]">Haze</div></div>
      </div>
      <Windows />
      <div className="ml-[13px] flex h-8 w-[220px] items-center rounded-full border border-[#545352] border-t-[#6a6968] bg-[#454443] pl-[10px] pr-[6px]">
        <Search className="h-4 w-4 stroke-[1.700] text-[#dcdcdc]" />
        <span className="ml-[10px] text-[14px] tracking-[-0.5px] text-[#d4d4d4]">Search</span>
        <span className="ml-auto"><Ship /></span>
      </div>
      <svg viewBox="0 0 24 22" className="ml-3 h-[22px] w-6"><rect x="6" width="18" height="16" rx="1" fill="#f2f2f2" /><rect y="6" width="18" height="16" rx="1" fill="#6d6d6d" /><rect x="6" y="6" width="12" height="10" fill="#a8a8a8" /></svg>
      <div className="ml-5 flex h-6 w-6 flex-col items-center justify-center bg-[#1a98ff] text-[7px] font-bold leading-[6.500px] tracking-[-0.2px] text-[#0b1b2e]">
        <span>prime</span><span>video</span>
        <svg viewBox="0 0 18 5" className="h-[5px] w-[18px]" fill="none" stroke="currentColor" strokeWidth="1.100"><path d="M1 .800c4 3.500 11 3.500 15 .5M13.500.800h3L15.500 3.500" /></svg>
      </div>
      <svg viewBox="0 0 24 24" className="ml-5 h-6 w-6"><rect width="24" height="24" fill="#000" /><path d="M6 0h4v24H6zM14 0h4v24h-4z" fill="#b1060f" /><path d="M6 0h4.200L18 24h-4z" fill="#e50914" /></svg>
      <div className="ml-5"><Settings /></div>
      <div className="relative ml-3 flex h-10 w-10 items-center justify-center rounded-[4px] border border-[#3e3d3c] bg-[#383736]">
        <Chrome />
        <Avatar className="absolute right-[2px] top-[2px] h-4 w-4" />
        <span className="absolute bottom-0 h-[3px] w-4 rounded-full bg-[#a3a3a3]" />
      </div>
      <div className="ml-3"><Explorer /></div>
      <div className="ml-5"><Edge /></div>
      <div className="ml-5"><VsCode /></div>
      <div className="ml-auto flex items-center pr-[21px]">
        <svg viewBox="0 0 12 7" className="h-[7px] w-3" fill="none" stroke="currentColor" strokeWidth="1.500"><path d="m1 6 5-5 5 5" /></svg>
        <svg viewBox="0 0 16 11" className="ml-[18px] h-[11px] w-4"><path d="M3 7a4.500 4.500 0 0 1 9-2.500L15 8H3z" fill="#9b9b9b" /><path d="M3 11a2.900 2.900 0 0 1 0-5.800c1.500 0 2 .8 3 .8 1.500-1.500 4.500-1.800 6 .4A2.700 2.700 0 0 1 13.500 11z" fill="#f5f5f5" /></svg>
        <div className="ml-[18px] w-6 text-center leading-4"><div className="tracking-[-0.2px]">ENG</div><div>IN</div></div>
        <svg viewBox="0 0 16 13" className="ml-[18px] h-[13px] w-4" fill="none" stroke="currentColor" strokeWidth="1.100"><path d="M.5 4.500a11 11 0 0 1 15 0M3 7.200a7.400 7.400 0 0 1 10 0M5.300 9.600a4 4 0 0 1 5.400 0" /><circle cx="8" cy="11.500" r="1.200" fill="currentColor" stroke="none" /></svg>
        <svg viewBox="0 0 16 14" className="ml-2 h-[14px] w-4" fill="none" stroke="currentColor" strokeWidth="1.100"><path d="M.6 5v4h2.600L6.500 12V2L3.200 5zM8.500 5a3 3 0 0 1 0 4M10.700 3a6 6 0 0 1 0 8M13 1a9 9 0 0 1 0 12" /></svg>
        <svg viewBox="0 0 16 14" className="ml-2 h-[14px] w-4" fill="none" stroke="currentColor"><path d="M8 3.500h6v8H4" strokeWidth="1.200" /><path d="M15 6v3" strokeWidth="1.800" /><path d="M.5 13 3 10.500C0 7 2 3.500 6.500.500c2 4 2.500 8-.5 9.800-1 .5-2 .4-3 .2" fill="currentColor" /><path d="m3 10.500 3-5" stroke="#272625" /></svg>
        <div className="ml-4 w-[63px] text-right leading-4"><div className="tracking-[-0.4px]">12:36</div><div className="tracking-[-0.06px]">13-11-2023</div></div>
        <svg viewBox="0 0 14 15" className="ml-2 h-[15px] w-[14px]" fill="none" stroke="currentColor" strokeWidth="1.100"><path d="M2.500 6a4.500 4.500 0 0 1 9 0v3.500l1.700 2.500H.8l1.700-2.500zM5.200 12.300c.3 2.200 3.300 2.200 3.600 0" /></svg>
      </div>
    </div>
  );
}

export default function App() {
  return (
    <div className="flex h-[768px] w-[1366px] flex-col overflow-hidden bg-white font-['Open_Sans','Noto_Sans',sans-serif]">
      <TabStrip />
      <Toolbar />
      <Bookmarks />
      <div className="flex h-[599px] shrink-0">
        <div className="flex w-[1349px] flex-col">
          <ConsoleHeader />
          <div className="flex min-h-0 flex-1 overflow-hidden">
            <SideNav />
            <Main />
          </div>
          <Footer />
        </div>
        <ScrollBar />
      </div>
      <Taskbar />
    </div>
  );
}
